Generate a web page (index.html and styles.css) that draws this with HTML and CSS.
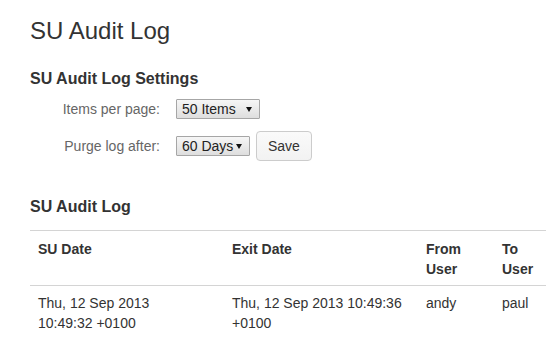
FILE: index.html
```html
<!DOCTYPE html>
<html lang="en">
    <head>
        <meta charset="UTF-8">
        <meta name="viewport" content="width=device-width, initial-scale=1.0">
        <title>SU Audit Log</title>
        <link rel="stylesheet" href="styles.css">
    </head>
    <body>
        <div class="page">
            <h1>SU Audit Log</h1>

            <h2 class="section-title">SU Audit Log Settings</h2>
            <form class="settings-form">
                <div class="form-row">
                    <label class="form-label" for="items-per-page">Items per page:</label>
                    <span class="select-wrap">
                        <select id="items-per-page" class="select select-items">
                            <option>50 Items</option>
                        </select>
                    </span>
                </div>
                <div class="form-row">
                    <label class="form-label" for="purge-after">Purge log after:</label>
                    <span class="select-wrap">
                        <select id="purge-after" class="select select-days">
                            <option>60 Days</option>
                        </select>
                    </span>
                    <button type="submit" class="btn">Save</button>
                </div>
            </form>

            <h2 class="section-title log-title">SU Audit Log</h2>
            <table class="log-table">
                <colgroup>
                    <col class="col-date">
                    <col class="col-date">
                    <col class="col-from">
                    <col>
                </colgroup>
                <thead>
                    <tr>
                        <th class="cell-su">SU Date</th>
                        <th>Exit Date</th>
                        <th>From User</th>
                        <th>To User</th>
                    </tr>
                </thead>
                <tbody>
                    <tr>
                        <td class="cell-su">Thu, 12 Sep 2013 10:49:32 +0100</td>
                        <td>Thu, 12 Sep 2013 10:49:36 +0100</td>
                        <td>andy</td>
                        <td>paul</td>
                    </tr>
                </tbody>
            </table>
        </div>
    </body>
</html>
```

FILE: styles.css
```css
/* Reset default styles */
* {
  margin: 0;
  padding: 0;
  box-sizing: border-box;
}

body {
  font-family: 'Liberation Sans', Arial, sans-serif;
  font-size: 14px;
  line-height: 20px;
  color: #333333;
  background-color: #ffffff;
  overflow: hidden;
}

.page {
  padding: 17px 0 0 30px;
}

h1 {
  font-size: 24px;
  font-weight: normal;
  line-height: 28px;
}

.section-title {
  font-size: 16px;
  font-weight: bold;
  line-height: 20px;
  margin: 24px 0 5px;
}

/* Settings form */
.settings-form {
  display: flex;
  flex-direction: column;
  gap: 7px;
}

.form-row {
  display: flex;
  align-items: center;
  height: 30px;
}

.form-label {
  width: 130px;
  margin-right: 16px;
  text-align: right;
  color: #666666;
}

.select-wrap {
  position: relative;
  display: inline-block;
}

.select-wrap::after {
  content: '';
  position: absolute;
  right: 8px;
  top: 8px;
  border-left: 3px solid transparent;
  border-right: 3px solid transparent;
  border-top: 5px solid #111111;
  pointer-events: none;
}

.select {
  appearance: none;
  -webkit-appearance: none;
  display: block;
  height: 20px;
  padding: 0 5px;
  font-family: 'Liberation Sans', Arial, sans-serif;
  font-size: 14px;
  line-height: 18px;
  color: #222222;
  border: 1px solid #a6a6a6;
  border-radius: 1px;
  background: linear-gradient(#f6f6f6, #dedede);
  outline: none;
}

.select-items {
  width: 84px;
}

.select-days {
  width: 74px;
}

.btn {
  height: 30px;
  margin-left: 6px;
  padding: 0 11px;
  font-family: 'Liberation Sans', Arial, sans-serif;
  font-size: 14px;
  color: #333333;
  border: 1px solid #cccccc;
  border-radius: 4px;
  background: linear-gradient(#fafafa, #f2f2f2);
  cursor: pointer;
}

/* Log table */
.log-title {
  margin: 36px 0 13px;
}

.log-table {
  width: 100%;
  table-layout: fixed;
  border-collapse: collapse;
  border-top: 1px solid #d4d4d4;
}

.col-date {
  width: 194px;
}

.col-from {
  width: 76px;
}

.log-table th,
.log-table td {
  text-align: left;
  vertical-align: top;
}

.log-table th {
  font-weight: bold;
  padding: 8px 8px 6px;
  border-bottom: 1px solid #d4d4d4;
}

.log-table td {
  padding: 7px 8px;
}

/* the SU date wraps before the time */
.log-table .cell-su {
  padding-right: 30px;
}
```
